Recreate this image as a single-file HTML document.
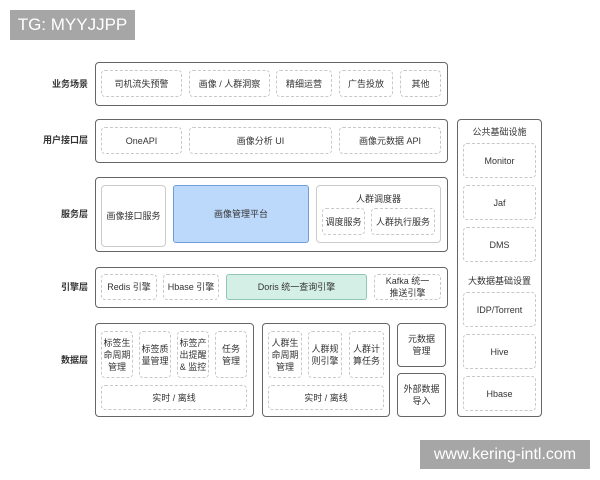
<!DOCTYPE html>
<html><head><meta charset="utf-8"><style>
*{margin:0;padding:0;box-sizing:border-box}
body{width:600px;height:480px;background:#fff;position:relative;overflow:hidden;font-family:"Liberation Sans","Noto Sans CJK SC",sans-serif;color:#333}
.a{position:absolute;display:flex;align-items:center;justify-content:center;text-align:center;font-size:9px;line-height:12px}
.o{border:1.3px solid #666;border-radius:4px}
.d{border:1px dashed #c8c8c8;border-radius:4px}
.s{border:1px solid #ccc;border-radius:4px}
.l{font-size:9px;font-weight:bold;justify-content:flex-end}
.badge{position:absolute;background:#a6a6a6;color:#fff;display:flex;align-items:center;justify-content:center}
</style></head><body>
<div class="badge" style="left:10px;top:10px;width:125px;height:30px;font-size:17px">TG: MYYJJPP</div>
<div class="badge" style="left:420px;top:440px;width:170px;height:29px;font-size:16px">www.kering-intl.com</div>

<div class="a l" style="left:30px;top:78px;width:58px">业务场景</div>
<div class="a o" style="left:95px;top:62px;width:353px;height:44px"></div>
<div class="a d" style="left:101px;top:70px;width:81px;height:27px">司机流失预警</div>
<div class="a d" style="left:189px;top:70px;width:81px;height:27px">画像 / 人群洞察</div>
<div class="a d" style="left:276px;top:70px;width:56px;height:27px">精细运营</div>
<div class="a d" style="left:339px;top:70px;width:54px;height:27px">广告投放</div>
<div class="a d" style="left:400px;top:70px;width:41px;height:27px">其他</div>

<div class="a l" style="left:30px;top:134px;width:58px">用户接口层</div>
<div class="a o" style="left:95px;top:119px;width:353px;height:44px"></div>
<div class="a d" style="left:101px;top:127px;width:81px;height:27px">OneAPI</div>
<div class="a d" style="left:189px;top:127px;width:143px;height:27px">画像分析 UI</div>
<div class="a d" style="left:339px;top:127px;width:102px;height:27px">画像元数据 API</div>

<div class="a l" style="left:30px;top:208px;width:58px">服务层</div>
<div class="a o" style="left:95px;top:177px;width:353px;height:75px"></div>
<div class="a s" style="left:101px;top:185px;width:65px;height:62px">画像接口服务</div>
<div class="a" style="left:173px;top:185px;width:136px;height:58px;background:#bcd8fb;border:1px solid #6f9ed8;border-radius:3px">画像管理平台</div>
<div class="a s" style="left:316px;top:185px;width:125px;height:58px;align-items:flex-start;padding-top:7px">人群调度器</div>
<div class="a d" style="left:322px;top:208px;width:43px;height:27px">调度服务</div>
<div class="a d" style="left:371px;top:208px;width:64px;height:27px">人群执行服务</div>

<div class="a l" style="left:30px;top:281px;width:58px">引擎层</div>
<div class="a o" style="left:95px;top:267px;width:353px;height:41px"></div>
<div class="a d" style="left:101px;top:274px;width:56px;height:26px">Redis 引擎</div>
<div class="a d" style="left:163px;top:274px;width:56px;height:26px">Hbase 引擎</div>
<div class="a" style="left:226px;top:274px;width:141px;height:26px;background:#d4efe5;border:1px solid #8fc7b3;border-radius:3px">Doris 统一查询引擎</div>
<div class="a d" style="left:374px;top:274px;width:67px;height:26px">Kafka 统一<br>推送引擎</div>

<div class="a l" style="left:30px;top:354px;width:58px">数据层</div>
<div class="a o" style="left:95px;top:323px;width:159px;height:94px"></div>
<div class="a d" style="left:101px;top:331px;width:32px;height:47px">标签生<br>命周期<br>管理</div>
<div class="a d" style="left:139px;top:331px;width:32px;height:47px">标签质<br>量管理</div>
<div class="a d" style="left:177px;top:331px;width:32px;height:47px">标签产<br>出提醒<br>&amp; 监控</div>
<div class="a d" style="left:215px;top:331px;width:32px;height:47px">任务<br>管理</div>
<div class="a d" style="left:101px;top:385px;width:146px;height:25px">实时 / 离线</div>

<div class="a o" style="left:262px;top:323px;width:128px;height:94px"></div>
<div class="a d" style="left:268px;top:331px;width:34px;height:47px">人群生<br>命周期<br>管理</div>
<div class="a d" style="left:308px;top:331px;width:34px;height:47px">人群规<br>则引擎</div>
<div class="a d" style="left:349px;top:331px;width:35px;height:47px">人群计<br>算任务</div>
<div class="a d" style="left:268px;top:385px;width:116px;height:25px">实时 / 离线</div>

<div class="a o" style="left:397px;top:323px;width:49px;height:44px">元数据<br>管理</div>
<div class="a o" style="left:397px;top:373px;width:49px;height:44px">外部数据<br>导入</div>

<div class="a o" style="left:457px;top:119px;width:85px;height:298px"></div>
<div class="a" style="left:457px;top:126px;width:85px;height:12px">公共基础设施</div>
<div class="a d" style="left:463px;top:143px;width:73px;height:35px">Monitor</div>
<div class="a d" style="left:463px;top:185px;width:73px;height:35px">Jaf</div>
<div class="a d" style="left:463px;top:227px;width:73px;height:35px">DMS</div>
<div class="a" style="left:457px;top:275px;width:85px;height:12px">大数据基础设置</div>
<div class="a d" style="left:463px;top:292px;width:73px;height:35px">IDP/Torrent</div>
<div class="a d" style="left:463px;top:334px;width:73px;height:35px">Hive</div>
<div class="a d" style="left:463px;top:376px;width:73px;height:35px">Hbase</div>
</body></html>
